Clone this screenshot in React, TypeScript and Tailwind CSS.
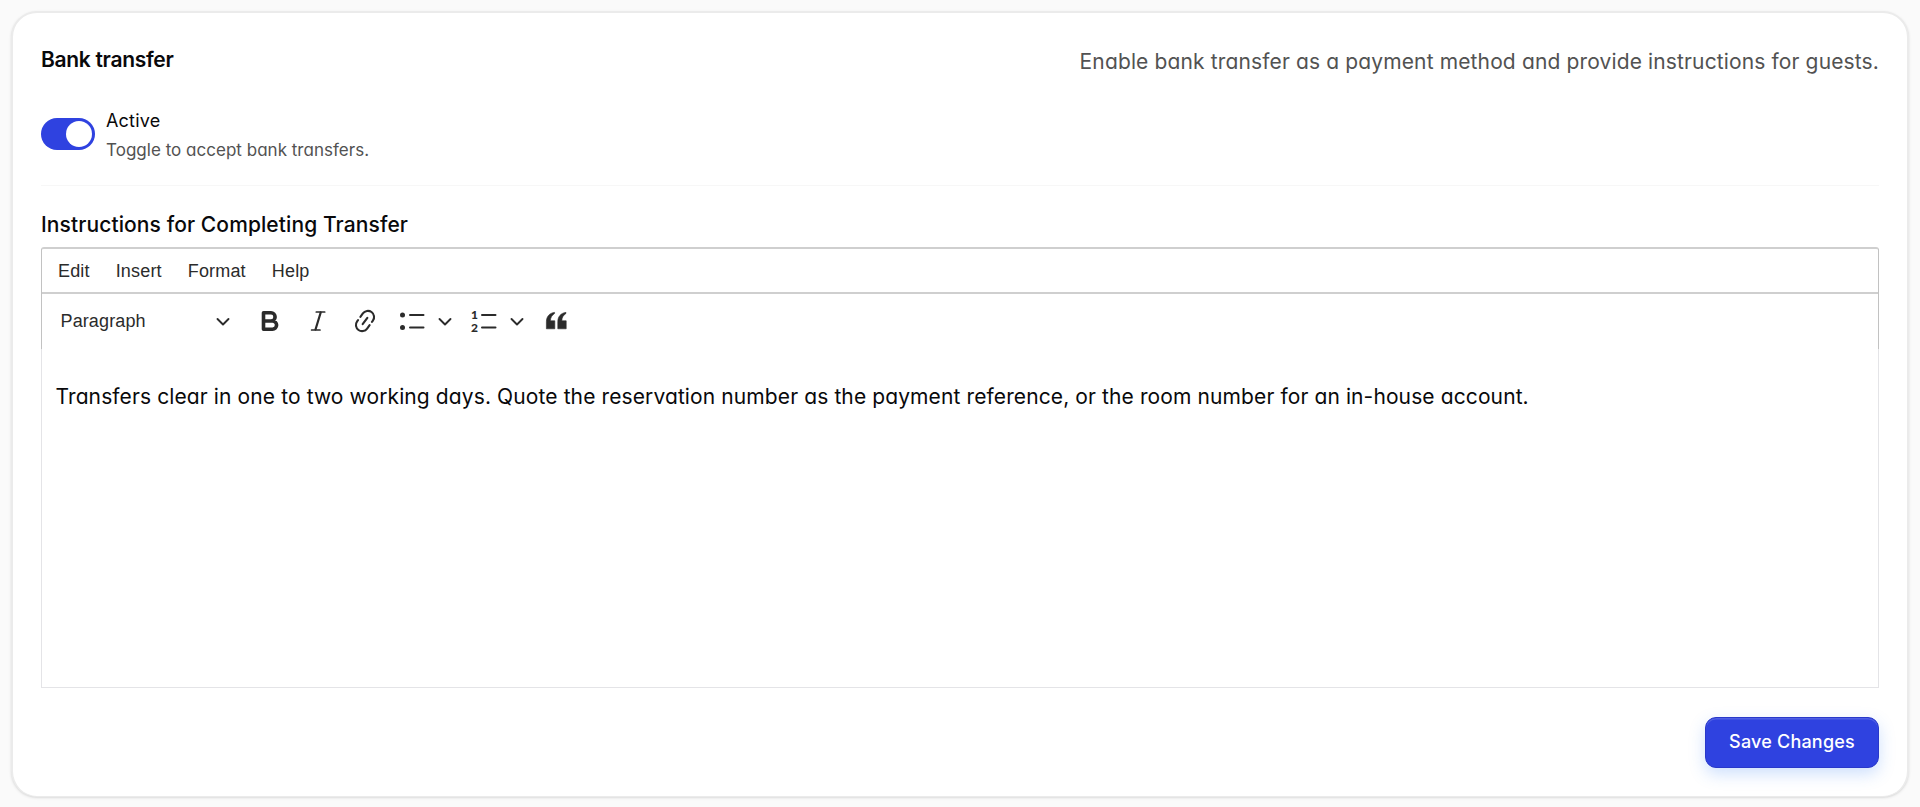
import { useState } from "react"

const menus = ["Edit", "Insert", "Format", "Help"]

function Chevron({ className }: { className?: string }) {
  return (
    <svg className={className} width="14" height="9" viewBox="0 0 14 9" fill="none" stroke="#2b2b2b" strokeWidth="1.9" strokeLinecap="round" strokeLinejoin="round">
      <path d="M1.500 2 7 7.500 12.500 2" />
    </svg>
  )
}

function BoldIcon({ className }: { className?: string }) {
  return (
    <svg className={className} width="24" height="24" viewBox="0 0 24 24" fill="none" stroke="#2b2b2b" strokeWidth="3.6" strokeLinejoin="round">
      <path d="M5.500 3.800H13a4.100 4.100 0 0 1 0 8.200H5.500zM5.500 12h9a4.100 4.100 0 0 1 0 8.200h-9z" />
    </svg>
  )
}

function ItalicIcon({ className }: { className?: string }) {
  return (
    <svg className={className} width="24" height="24" viewBox="0 0 24 24" fill="none" stroke="#2b2b2b" strokeLinecap="round">
      <path strokeWidth="1.700" d="M10.300 3h8.400M5.600 21H14" />
      <path strokeWidth="2.200" d="m14.700 3.500-5.200 17" />
    </svg>
  )
}

function LinkIcon({ className }: { className?: string }) {
  return (
    <svg className={className} width="24" height="24" viewBox="0 0 24 24" fill="none" stroke="#2b2b2b" strokeWidth="2.1" strokeLinecap="round">
      <g transform="translate(12 12) rotate(-54)">
        <path d="M.7-6.200h4.200a6.200 6.200 0 0 1 0 12.400H3.300" />
        <path d="M-.7 6.200h-4.200a6.200 6.200 0 0 1 0-12.400h1.600" />
        <path d="M-4 0h8" />
      </g>
    </svg>
  )
}

function BulletListIcon({ className }: { className?: string }) {
  return (
    <svg className={className} width="28" height="24" viewBox="0 0 28 24" fill="#2b2b2b">
      <circle cx="4.500" cy="6" r="2.500" />
      <circle cx="4.500" cy="18.500" r="2.500" />
      <path d="M12 6h13.500M12 18.500h13.500" stroke="#2b2b2b" strokeWidth="2" strokeLinecap="round" />
    </svg>
  )
}

function NumberedListIcon({ className }: { className?: string }) {
  return (
    <div className={className}>
      <svg className="-my-1" width="28" height="32" viewBox="0 -4 28 32" fill="#2b2b2b">
        <text x="4.500" y="9.500" textAnchor="middle" className="font-['Lato',sans-serif] text-[12px] font-black">1</text>
        <text x="4.500" y="23" textAnchor="middle" className="font-['Lato',sans-serif] text-[12px] font-black">2</text>
        <path d="M12 6h13.500M12 18.500h13.500" stroke="#2b2b2b" strokeWidth="2" strokeLinecap="round" />
      </svg>
    </div>
  )
}

function QuoteIcon({ className }: { className?: string }) {
  return (
    <svg className={className} width="24" height="24" viewBox="0 0 24 24" fill="#2b2b2b" stroke="#2b2b2b" strokeWidth=".6" strokeLinejoin="round">
      <path d="M10.600 3.400C5.400 4 2.400 7.600 2.400 12.800v7h8.400v-8H6.400c.1-3.200 1.600-5.800 4.200-7.400zM22 3.400c-5.200.6-8.200 4.200-8.200 9.400v7h8.400v-8h-4.400c.1-3.200 1.600-5.800 4.200-7.400z" />
    </svg>
  )
}

export default function App() {
  const [active, setActive] = useState(true)

  return (
    <div className="flex h-[807px] w-full bg-[#fafafa] px-[11px] pt-[11px] pb-[10px] font-['Inter',sans-serif] text-[#09090b]">
      <section className="flex w-full flex-col rounded-[26px] border-2 border-b border-[#ebebeb] bg-white px-[28px] pt-[30px] shadow-sm">
        {/* Header */}
        <div className="flex h-[67px] items-start justify-between">
          <h2 className="text-[21px] leading-[33px] font-semibold tracking-[-0.3px]">Bank transfer</h2>
          <p className="pt-[3px] text-[21px] leading-[32px] tracking-[0.135px] text-[#525252] [font-feature-settings:'cv11']">
            Enable bank transfer as a payment method and provide instructions for guests.
          </p>
        </div>

        {/* Toggle */}
        <div className="flex h-[76px] items-start gap-[11px] border-b border-[#f7f7f7]">
          <button
            type="button"
            role="switch"
            aria-checked={active}
            onClick={() => setActive(!active)}
            className={`mt-2 flex h-8 w-[54px] items-center rounded-full p-[3px] ${active ? "justify-end bg-[#2f42e0]" : "justify-start bg-zinc-200"}`}
          >
            <span className="size-[26px] rounded-full bg-white" />
          </button>
          <div>
            <div className="text-[18px] leading-[22px] tracking-[0.2px]">Active</div>
            <div className="mt-[6px] text-[17px] leading-[24px] tracking-[0.02px] text-[#525252] [font-feature-settings:'cv11']">
              Toggle to accept bank transfers.
            </div>
          </div>
        </div>

        <label className="mt-[23px] text-[21px] leading-[32px] font-medium tracking-[0.1px]">Instructions for Completing Transfer</label>

        {/* Editor */}
        <div className="mt-[6px] h-[441px] text-[#2b2b2b]">
          <div className="rounded-t-[3px] border-x-[1px] border-t-2 border-[#cfcfcf] border-x-[#c2c2c2] font-['Liberation_Sans',sans-serif]">
            <div className="flex h-[45px] items-center gap-[26px] border-b-2 border-[#cfcfcf] pt-px pl-4 text-[18px] tracking-[0.17px]">
              {menus.map((menu) => (
                <span key={menu}>{menu}</span>
              ))}
            </div>
            <div className="flex h-[55px] items-center pb-px pl-[18.5px] text-[18px] tracking-[0.12px]">
              <span className="w-[155.5px]">Paragraph</span>
              <Chevron />
              <BoldIcon className="ml-[28px]" />
              <ItalicIcon className="ml-[24px]" />
              <LinkIcon className="ml-[23px]" />
              <BulletListIcon className="ml-[21px]" />
              <Chevron className="ml-[12px]" />
              <NumberedListIcon className="ml-[18px]" />
              <Chevron className="ml-[12px]" />
              <QuoteIcon className="ml-[20px]" />
            </div>
          </div>
          <div className="h-[339px] border border-t-0 border-[#e4e4e7] px-[13.5px] pt-[32px] text-[21px] leading-[32px] tracking-[0.11px] text-[#09090b] [font-feature-settings:'cv11']">
            Transfers clear in one to two working days. Quote the reservation number as the payment reference, or the room number for an in-house account.
          </div>
        </div>

        <button
          type="button"
          className="mt-[29px] h-[51px] w-[174px] self-end rounded-[11px] border border-[#2938c9] bg-[#2f42e0] pb-[2px] text-[18px] font-medium tracking-[0.2px] text-white shadow-[inset_0_1.5px_0_rgba(255,255,255,0.15),0_6px_16px_rgba(59,130,246,0.25)]"
        >
          Save Changes
        </button>
      </section>
    </div>
  )
}
